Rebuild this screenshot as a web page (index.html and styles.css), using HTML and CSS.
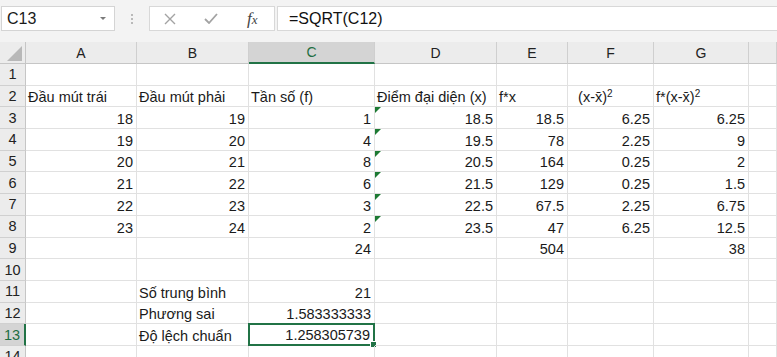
FILE: index.html
```html
<!DOCTYPE html>
<html lang="vi">

<head>
    <meta charset="UTF-8">
    <title>Phương sai</title>
    <link rel="stylesheet" href="styles.css">
</head>

<body>
    <div class="fbar">
        <div class="namebox">
            <span>C13</span>
            <svg class="drop" width="8" height="5" viewBox="0 0 8 5"><path d="M1 1h6l-3 3z" fill="#7a7a7a"/></svg>
        </div>
        <div class="grip">
            <svg width="4" height="12" viewBox="0 0 4 12"><circle cx="2" cy="2" r="1" fill="#a6a6a6"/><circle cx="2" cy="6" r="1" fill="#a6a6a6"/><circle cx="2" cy="10" r="1" fill="#a6a6a6"/></svg>
        </div>
        <div class="fbtns">
            <svg width="12" height="12" viewBox="0 0 12 12"><path d="M1 1l10 10M11 1L1 11" stroke="#a3a3a3" stroke-width="1.4" fill="none"/></svg>
            <svg width="14" height="11" viewBox="0 0 14 11"><path d="M1 6l4 4 8-9" stroke="#a3a3a3" stroke-width="1.8" fill="none"/></svg>
            <span class="fx">f<i>x</i></span>
        </div>
        <div class="fbox">=SQRT(C12)</div>
    </div>

    <div class="sheet">
        <div class="r head">
            <div class="corner"><svg width="16" height="15" viewBox="0 0 16 15"><path d="M15 0v15H0z" fill="#b8b8b8"/></svg></div>
            <div class="ch">A</div>
            <div class="ch">B</div>
            <div class="ch sel">C</div>
            <div class="ch">D</div>
            <div class="ch">E</div>
            <div class="ch">F</div>
            <div class="ch">G</div>
            <div class="ch"></div>
        </div>
        <div class="r">
            <div class="rh">1</div>
            <div class="c"></div><div class="c"></div><div class="c"></div><div class="c"></div>
            <div class="c"></div><div class="c"></div><div class="c"></div><div class="c"></div>
        </div>
        <div class="r">
            <div class="rh">2</div>
            <div class="c">Đầu mút trái</div>
            <div class="c">Đầu mút phải</div>
            <div class="c">Tần số (f)</div>
            <div class="c">Điểm đại diện (x)</div>
            <div class="c">f*x</div>
            <div class="c">&nbsp;&nbsp;(x-x̄)<sup>2</sup></div>
            <div class="c">f*(x-x̄)<sup>2</sup></div>
            <div class="c"></div>
        </div>
        <div class="r">
            <div class="rh">3</div>
            <div class="c n">18</div><div class="c n">19</div><div class="c n">1</div><div class="c n warn">18.5</div>
            <div class="c n">18.5</div><div class="c n">6.25</div><div class="c n">6.25</div><div class="c"></div>
        </div>
        <div class="r">
            <div class="rh">4</div>
            <div class="c n">19</div><div class="c n">20</div><div class="c n">4</div><div class="c n warn">19.5</div>
            <div class="c n">78</div><div class="c n">2.25</div><div class="c n">9</div><div class="c"></div>
        </div>
        <div class="r">
            <div class="rh">5</div>
            <div class="c n">20</div><div class="c n">21</div><div class="c n">8</div><div class="c n warn">20.5</div>
            <div class="c n">164</div><div class="c n">0.25</div><div class="c n">2</div><div class="c"></div>
        </div>
        <div class="r">
            <div class="rh">6</div>
            <div class="c n">21</div><div class="c n">22</div><div class="c n">6</div><div class="c n warn">21.5</div>
            <div class="c n">129</div><div class="c n">0.25</div><div class="c n">1.5</div><div class="c"></div>
        </div>
        <div class="r">
            <div class="rh">7</div>
            <div class="c n">22</div><div class="c n">23</div><div class="c n">3</div><div class="c n warn">22.5</div>
            <div class="c n">67.5</div><div class="c n">2.25</div><div class="c n">6.75</div><div class="c"></div>
        </div>
        <div class="r">
            <div class="rh">8</div>
            <div class="c n">23</div><div class="c n">24</div><div class="c n">2</div><div class="c n warn">23.5</div>
            <div class="c n">47</div><div class="c n">6.25</div><div class="c n">12.5</div><div class="c"></div>
        </div>
        <div class="r">
            <div class="rh">9</div>
            <div class="c"></div><div class="c"></div><div class="c n">24</div><div class="c"></div>
            <div class="c n">504</div><div class="c"></div><div class="c n">38</div><div class="c"></div>
        </div>
        <div class="r">
            <div class="rh">10</div>
            <div class="c"></div><div class="c"></div><div class="c"></div><div class="c"></div>
            <div class="c"></div><div class="c"></div><div class="c"></div><div class="c"></div>
        </div>
        <div class="r">
            <div class="rh">11</div>
            <div class="c"></div><div class="c">Số trung bình</div><div class="c n">21</div><div class="c"></div>
            <div class="c"></div><div class="c"></div><div class="c"></div><div class="c"></div>
        </div>
        <div class="r">
            <div class="rh">12</div>
            <div class="c"></div><div class="c">Phương sai</div><div class="c n">1.583333333</div><div class="c"></div>
            <div class="c"></div><div class="c"></div><div class="c"></div><div class="c"></div>
        </div>
        <div class="r">
            <div class="rh sel">13</div>
            <div class="c"></div><div class="c">Độ lệch chuẩn</div><div class="c n active">1.258305739</div><div class="c"></div>
            <div class="c"></div><div class="c"></div><div class="c"></div><div class="c"></div>
        </div>
        <div class="r">
            <div class="rh">14</div>
            <div class="c"></div><div class="c"></div><div class="c"></div><div class="c"></div>
            <div class="c"></div><div class="c"></div><div class="c"></div><div class="c"></div>
        </div>
    </div>
</body>

</html>
```

FILE: styles.css
```css
* {
    padding: 0;
    margin: 0;
    box-sizing: border-box;
}

html,
body {
    height: 100%;
    overflow: hidden;
}

body {
    background: #fff;
    font-family: "Liberation Sans", Arial, sans-serif;
    color: #1a1a1a;
}

/* formula bar */
.fbar {
    height: 42px;
    background: #f3f3f3;
    display: flex;
    align-items: flex-start;
    padding-top: 6px;
}

.namebox {
    margin-left: 1px;
    width: 114px;
    height: 25px;
    background: #fff;
    border: 1px solid #d4d4d4;
    display: flex;
    align-items: center;
    justify-content: space-between;
    padding: 0 7px 0 5px;
    font-size: 16px;
}

.grip {
    width: 34px;
    height: 25px;
    display: flex;
    align-items: center;
    justify-content: center;
}

.fbtns {
    width: 126px;
    height: 25px;
    background: #fff;
    border: 1px solid #d8d8d8;
    display: flex;
    align-items: center;
    padding-left: 14px;
    gap: 0;
}

.fbtns svg:first-child {
    margin-right: 28px;
}

.fbtns svg:nth-child(2) {
    margin-right: 29px;
}

.fx {
    font-family: "Liberation Serif", serif;
    font-style: italic;
    font-size: 17px;
    color: #444;
}

.fx i {
    font-size: 13px;
}

.fbox {
    flex: 1;
    margin-left: 2px;
    height: 25px;
    background: #fff;
    border: 1px solid #d8d8d8;
    border-right: none;
    display: flex;
    align-items: center;
    padding-left: 11px;
    font-size: 16px;
    color: #111;
}

/* grid */
.r {
    display: grid;
    grid-template-columns: 26px 111px 112px 126px 122px 71px 86px 95px 28px;
    height: 21.7px;
}

.r.head {
    height: 22px;
}

.corner {
    background: #ececec;
    border-right: 1px solid #c6c6c6;
    border-bottom: 1px solid #c6c6c6;
    display: flex;
    align-items: flex-end;
    justify-content: flex-end;
    padding: 0 2px 2px 0;
}

.ch {
    background: #ececec;
    border-right: 1px solid #cfcfcf;
    border-bottom: 1px solid #c6c6c6;
    display: flex;
    align-items: center;
    justify-content: center;
    font-size: 14px;
    color: #222;
}

.ch.sel {
    background: #d4d4d4;
    color: #1e6e42;
    border-bottom: 2px solid #217346;
}

.rh {
    background: #ececec;
    border-right: 1px solid #c6c6c6;
    border-bottom: 1px solid #d0d0d0;
    display: flex;
    align-items: center;
    justify-content: center;
    font-size: 14.5px;
    color: #222;
}

.rh.sel {
    background: #d4d4d4;
    color: #1e6e42;
    border-right: 2px solid #217346;
}

.c {
    position: relative;
    border-right: 1px solid #e1e1e1;
    border-bottom: 1px solid #e1e1e1;
    display: flex;
    align-items: flex-end;
    padding: 0 2px 1px 2px;
    font-size: 14.5px;
    white-space: nowrap;
    overflow: visible;
}

.c.n {
    justify-content: flex-end;
    padding-right: 3px;
}

.c sup {
    font-size: 10px;
    align-self: flex-start;
    margin-top: 2px;
}

.warn::before {
    content: "";
    position: absolute;
    left: 0;
    top: 0;
    border-top: 6px solid #1d7a33;
    border-right: 6px solid transparent;
}

.active {
    border: 2px solid #217346;
    margin: -1px 0 0 -1px;
}

.active::after {
    content: "";
    position: absolute;
    right: -4px;
    bottom: -4px;
    width: 5px;
    height: 5px;
    background: #217346;
    border: 1px solid #fff;
}
```
